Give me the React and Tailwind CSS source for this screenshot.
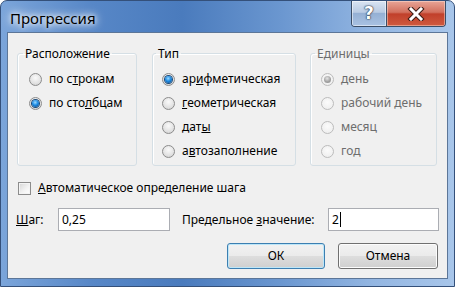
import React from "react"

const font = "font-['Segoe_UI','Noto_Sans',sans-serif]"

const Radio = ({ checked, disabled }) => (
    <span className={`w-[13px] h-[13px] rounded-full border flex items-center justify-center shrink-0
        ${disabled ? 'border-[#bcbcbc] bg-[radial-gradient(circle_at_50%_40%,#fbfbfb,#ebebeb)]'
            : 'border-[#8c8c8c] bg-[radial-gradient(circle_at_50%_35%,#fafafa,#e2e2e2_60%,#cccccc)]'}`}>
        {checked && (
            <span className={`w-[7px] h-[7px] rounded-full
                ${disabled ? 'bg-[radial-gradient(circle_at_45%_35%,#e4e4e4,#a3a3a3_55%,#8a8a8a)]'
                    : 'bg-[radial-gradient(circle_at_45%_35%,#9fdcff,#1c8be4_45%,#0b3f78)] shadow-[0_0_0_1px_#1a4a7a]'}`} />
        )}
    </span>
)

const Option = ({ checked, disabled, children }) => (
    <div className="h-[24px] flex items-center gap-[7px]">
        <Radio checked={checked} disabled={disabled} />
        <span className={disabled ? 'text-[#6d6d6d]' : 'text-black'}>{children}</span>
    </div>
)

const Group = ({ title, width, pad, legend, disabled, children }) => (
    <fieldset className={`${width} h-[120px] border border-[#d5dfe5] rounded-[3px] shadow-[inset_1px_1px_0_#fff]`}>
        <legend className={`${legend} px-[2px] leading-[15px] ${disabled ? 'text-[#6d6d6d]' : 'text-black'}`}>{title}</legend>
        <div className={`pt-[6px] ${pad}`}>{children}</div>
    </fieldset>
)

const WinButton = ({ children, primary, width }) => (
    <button className={`${width} h-[26px] rounded-[3px] border text-black
        bg-[linear-gradient(#f2f2f2,#ebebeb_48%,#dddddd_52%,#cfcfcf)]
        ${primary ? 'border-[#3c7fb1] shadow-[inset_0_0_0_1px_#bde6f8]' : 'border-[#707070] shadow-[inset_0_0_0_1px_#fcfcfc]'}`}>
        {children}
    </button>
)

export default function App() {
    return (
        <div className={`w-[455px] h-[287px] ${font} text-[12px] flex flex-col rounded-t-[7px] border border-[#34507a]
            bg-[linear-gradient(90deg,#7ba5da_0%,#5787c7_20%,#4a7bbd_40%,#6b97d0_62%,#93b6e2_82%,#a8c6ea_100%)]`}>
            {/* title bar */}
            <div className="h-[31px] flex items-start justify-between">
                <div className="pl-[9px] pt-[8px] text-[15px] leading-[18px] text-black [text-shadow:0_0_8px_#fff,0_0_12px_#fff,0_0_4px_rgba(255,255,255,0.8)]">
                    Прогрессия
                </div>
                <div className="flex mr-[8px] rounded-b-[4px] border border-t-0 border-[#3b4d66] overflow-hidden">
                    <div className="w-[35px] h-[25px] flex items-center justify-center border-r border-[#3b4d66]
                        bg-[linear-gradient(#d9e4f2,#b9cbe3_45%,#95b0d4_50%,#a9c2e3)] shadow-[inset_0_0_0_1px_rgba(255,255,255,0.5)]">
                        <span className="text-[17px] font-bold text-white font-['DejaVu_Sans',sans-serif] [text-shadow:0_0_1px_#27384f,0_0_1px_#27384f,0_0_2px_#27384f]">?</span>
                    </div>
                    <div className="w-[58px] h-[25px] flex items-center justify-center
                        bg-[linear-gradient(#e8a597,#d2705e_45%,#c1402b_52%,#cf5a3f)] shadow-[inset_0_0_0_1px_rgba(255,230,220,0.45)]">
                        <svg width="18" height="14" viewBox="0 0 18 14">
                            <path d="M4 2 L14 12 M14 2 L4 12" stroke="#3b1a14" strokeWidth="5" strokeLinecap="square" />
                            <path d="M4 2 L14 12 M14 2 L4 12" stroke="#fff" strokeWidth="3" strokeLinecap="square" />
                        </svg>
                    </div>
                </div>
            </div>

            {/* client area */}
            <div className="mx-[6px] h-[247px] bg-[#f0f0f0] border border-[#5c7698] flex flex-col">
                <div className="flex pl-[9px] mt-[13px]">
                    <Group title="Расположение" width="w-[120px]" pad="pl-[11px]" legend="ml-[5px]">
                        <Option>по с<u>т</u>рокам</Option>
                        <Option checked>по сто<u>л</u>бцам</Option>
                    </Group>
                    <div className="w-[15px]" />
                    <Group title="Тип" width="w-[144px]" pad="pl-[9px]" legend="ml-[3px]">
                        <Option checked>ар<u>и</u>фметическая</Option>
                        <Option><u>г</u>еометрическая</Option>
                        <Option>дат<u>ы</u></Option>
                        <Option>а<u>в</u>тозаполнение</Option>
                    </Group>
                    <div className="w-[14px]" />
                    <Group title="Единицы" width="w-[127px]" pad="pl-[10px]" legend="ml-[4px]" disabled>
                        <Option checked disabled>день</Option>
                        <Option disabled>рабочий день</Option>
                        <Option disabled>месяц</Option>
                        <Option disabled>год</Option>
                    </Group>
                </div>

                <div className="mt-[14px] h-[16px] pl-[10px] flex items-center gap-[7px]">
                    <span className="w-[13px] h-[13px] border border-[#8c8c8c] bg-[linear-gradient(135deg,#d6d6d6,#f4f4f4_60%,#ffffff)] shadow-[inset_0_0_0_1px_#f4f4f4]" />
                    <span><u>А</u>втоматическое определение шага</span>
                </div>

                <div className="mt-[12px] h-[23px] pl-[8px] flex items-center">
                    <span className="w-[42px]"><u>Ш</u>аг:</span>
                    <div className="w-[112px] h-[23px] bg-white border border-[#abadb3] flex items-center pl-[3px]">0,25</div>
                    <span className="ml-[12px] w-[146px]">Предельное <u>з</u>начение:</span>
                    <div className="w-[111px] h-[23px] bg-white border border-[#abadb3] flex items-center pl-[3px]">
                        2<span className="w-[1px] h-[15px] bg-black ml-[1px]" />
                    </div>
                </div>

                <div className="mt-[12px] flex ml-[219px] gap-[13px]">
                    <WinButton primary width="w-[98px]">ОК</WinButton>
                    <WinButton width="w-[100px]">Отмена</WinButton>
                </div>
            </div>
        </div>
    )
}
